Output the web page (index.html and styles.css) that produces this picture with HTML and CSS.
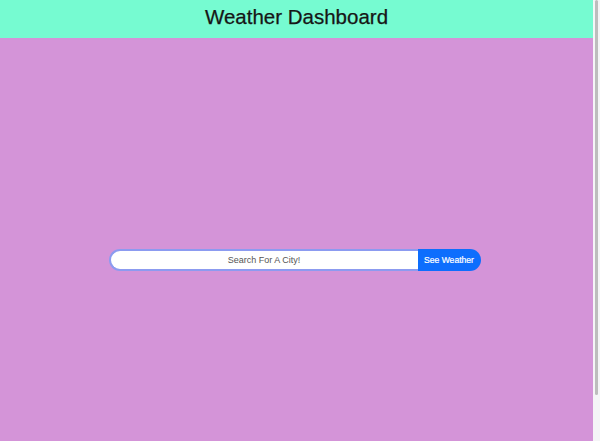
FILE: index.html
```html
<!DOCTYPE html>
<html lang="en">
<head>
<meta charset="utf-8">
<title>Weather Dashboard</title>
<link rel="stylesheet" href="styles.css">
</head>
<body>
<div class="page">
  <header class="topbar">
    <h1 class="title">Weather Dashboard</h1>
  </header>
  <main class="content">
    <form class="search">
      <input class="search-input" type="text" placeholder="Search For A City!">
      <button class="search-btn" type="button">See Weather</button>
    </form>
  </main>
</div>
<div class="scrollbar"><div class="thumb"></div></div>
</body>
</html>
```
FILE: styles.css
```css
html, body {
  margin: 0;
  padding: 0;
  height: 100%;
  overflow: hidden;
}
body {
  font-family: "Liberation Sans", Arial, sans-serif;
  background: #f7f7f7;
}
.page {
  width: 593px;
  height: 441px;
  background: #d494d8;
  display: flex;
  flex-direction: column;
}
.topbar {
  height: 38px;
  box-sizing: border-box;
  padding-bottom: 4px;
  background: #76fbd1;
  display: flex;
  align-items: center;
  justify-content: center;
}
.title {
  margin: 0;
  font-size: 20.5px;
  font-weight: 400;
  color: #161616;
  -webkit-text-stroke: 0.25px #161616;
}
.content {
  flex: 1;
  display: flex;
  justify-content: center;
  padding-top: 211px;
  padding-right: 4px;
}
.search {
  display: flex;
  height: 22px;
  margin: 0;
}
.search-input {
  box-sizing: border-box;
  width: 309px;
  height: 22px;
  border: 2px solid #8c9bf0;
  border-right: none;
  border-radius: 11px 0 0 11px;
  background: #fff;
  text-align: center;
  font-family: "Liberation Sans", Arial, sans-serif;
  font-size: 9px;
  outline: none;
  padding: 0 8px;
}
.search-input::placeholder {
  color: #555;
}
.search-btn {
  box-sizing: border-box;
  width: 63px;
  height: 22px;
  border: none;
  border-radius: 0 11px 11px 0;
  background: #0d6efd;
  color: #fff;
  font-family: "Liberation Sans", Arial, sans-serif;
  font-size: 8.6px;
  -webkit-text-stroke: 0.2px #fff;
  padding: 0;
}
.scrollbar {
  position: fixed;
  top: 0;
  right: 0;
  width: 7px;
  height: 441px;
  background: #f5f5f7;
}
.thumb {
  margin-left: 2px;
  width: 3px;
  height: 395px;
  background: #bdbdbd;
  border-radius: 2px;
}
```
